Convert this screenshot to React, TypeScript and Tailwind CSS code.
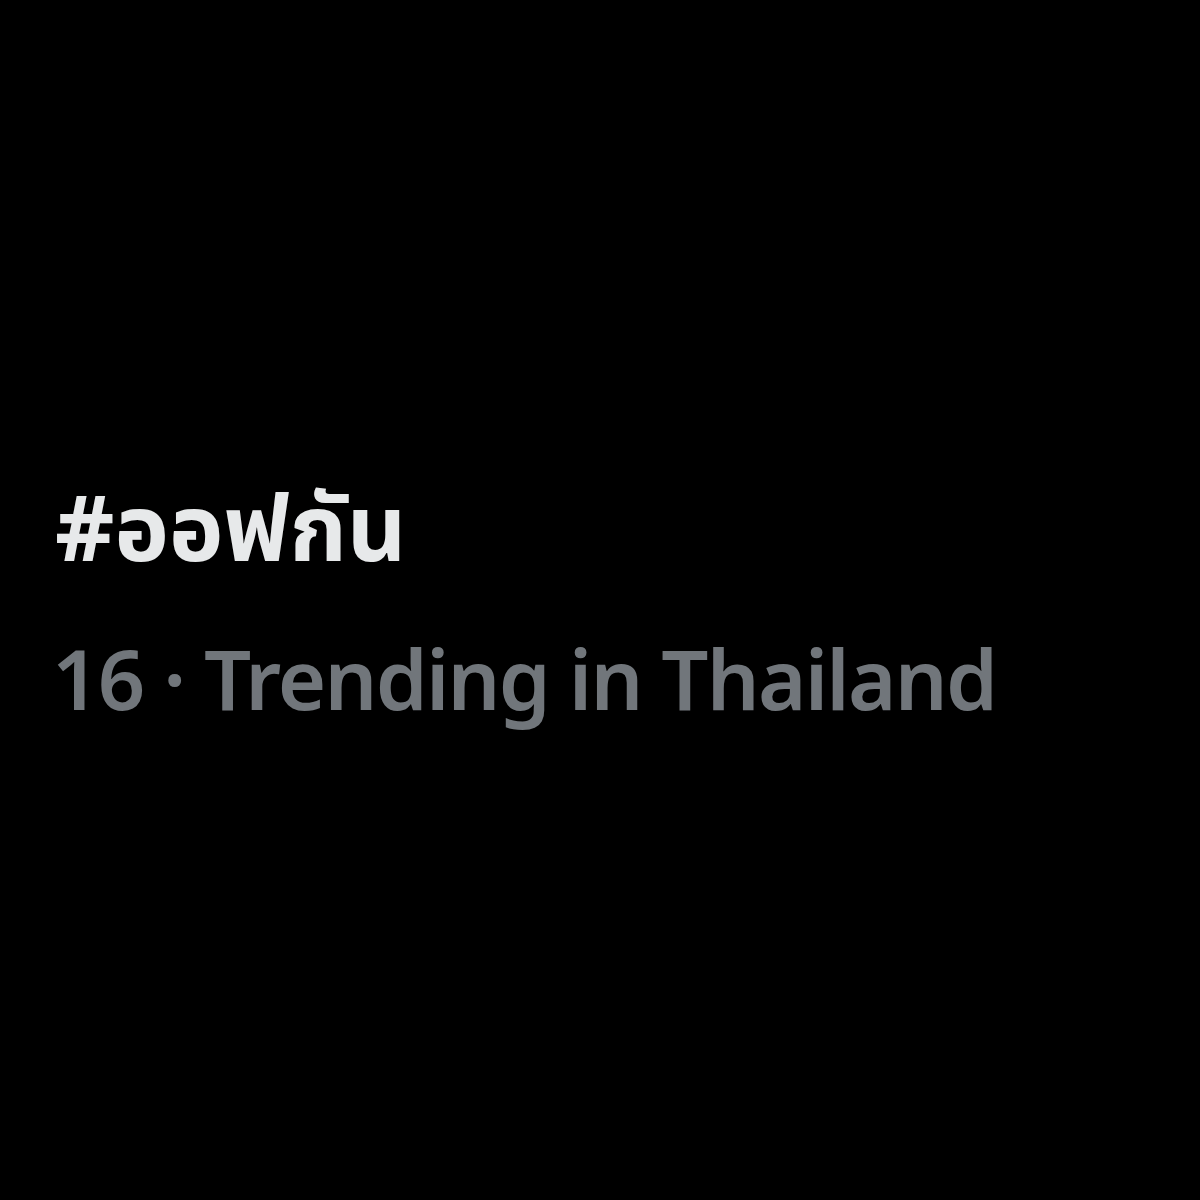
export default function App() {
  return (
    <div className="w-[1200px] h-[1200px] bg-black flex flex-col pl-[55px] pt-[471px]">
      <div className="text-[#e7e9ea] text-[92px] font-bold leading-[110px] font-['Noto_Sans','Noto_Sans_Thai','Liberation_Sans',sans-serif]">
        #ออฟกัน
      </div>
      <div className="mt-[42px] -ml-[3px] text-[#71767b] text-[83px] font-semibold leading-[110px] tracking-[-1.8px] font-['Noto_Sans','Liberation_Sans',sans-serif]">
        16 · Trending in Thailand
      </div>
    </div>
  );
}
